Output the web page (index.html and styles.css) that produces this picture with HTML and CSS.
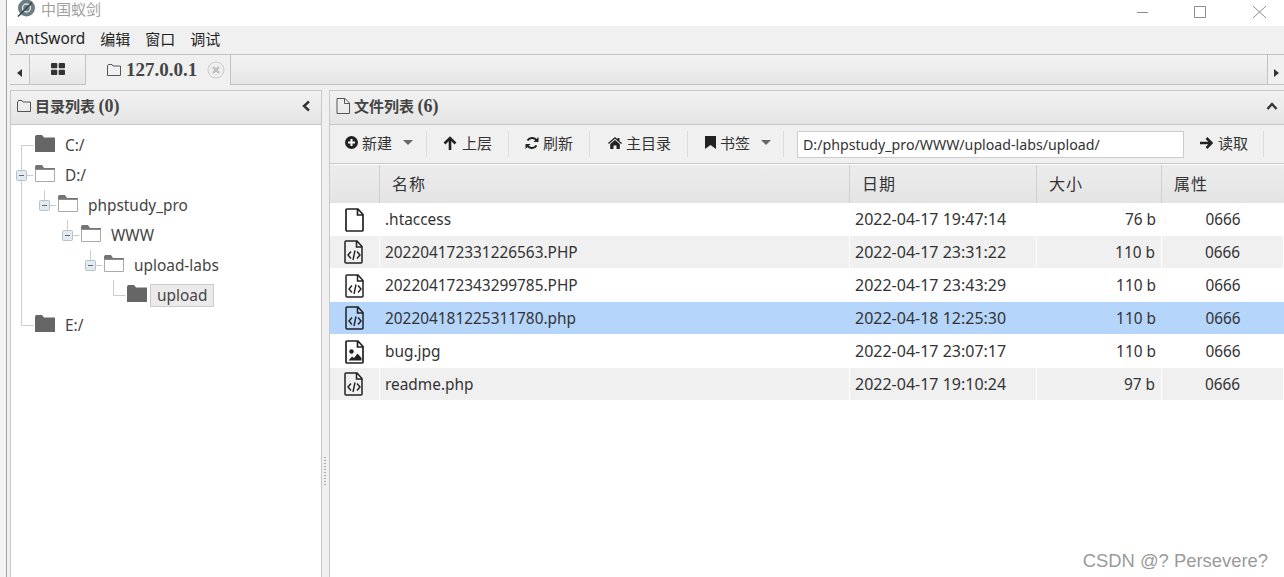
FILE: index.html
```html
<!DOCTYPE html>
<html lang="zh-CN">
<head>
    <meta charset="UTF-8">
    <meta name="viewport" content="width=device-width, initial-scale=1.0">
    <title>中国蚁剑</title>
    <link rel="stylesheet" href="styles.css">
</head>
<body>
    <svg class="defs" width="0" height="0">
        <symbol id="folder-closed" viewBox="0 0 20 17"><path d="M0 1.5 1 0h6l2 2.500h11V17H0z" fill="#666"/></symbol>
        <symbol id="folder-open" viewBox="0 0 20 17"><path d="M.5 4.500h19v12H.5z" fill="#fff" stroke="#aaa"/><path d="M0 4.500V1.500L1 0h6l2 3h11v1.500z" fill="#666" opacity=".9"/></symbol>
        <symbol id="page" viewBox="0 0 20 24"><path d="M2 1h11l5 5.500V22a1 1 0 0 1-1 1H2a1 1 0 0 1-1-1V2a1 1 0 0 1 1-1zM12.500 1v6H18" fill="none" stroke="currentColor" stroke-width="1.700"/></symbol>
        <symbol id="page-code" viewBox="0 0 20 24"><path d="M2 1h11l5 5.500V22a1 1 0 0 1-1 1H2a1 1 0 0 1-1-1V2a1 1 0 0 1 1-1zM12.500 1v6H18" fill="none" stroke="currentColor" stroke-width="1.500"/><path d="M7 11.500l-3 3.500 3 3.500M13 11.500l3 3.500-3 3.500M11 10.500 9 20" fill="none" stroke="currentColor" stroke-width="1.400"/></symbol>
        <symbol id="page-image" viewBox="0 0 20 24"><path d="M2 1h11l5 5.500V22a1 1 0 0 1-1 1H2a1 1 0 0 1-1-1V2a1 1 0 0 1 1-1zM12.500 1v6H18" fill="none" stroke="currentColor" stroke-width="1.700"/><circle cx="6.500" cy="11.500" r="2.200" fill="currentColor"/><path d="M3.500 20.500l3.500-4 2 1.500 3.500-4.500 4 4.500v2.500z" fill="currentColor"/></symbol>
    </svg>

    <div class="window">
        <div class="titlebar">
            <svg class="app-logo" width="20" height="20" viewBox="0 0 20 20">
                <circle cx="10.500" cy="9" r="8.500" fill="#6a7c82"/>
                <circle cx="10.500" cy="9" r="4" fill="none" stroke="#dfe4e6" stroke-width="1.400"/>
                <path d="M2 17.500 16 3.500" stroke="#3a474b" stroke-width="1.600"/>
            </svg>
            <span class="app-name">中国蚁剑</span>
            <div class="win-controls">
                <svg width="130" height="16" viewBox="0 0 130 16" fill="none" stroke="#8c8c8c">
                    <path d="M0 7.500h11"/>
                    <path d="M57.500 1.500h11v11h-11z"/>
                    <path d="M116 1l13 12M129 1l-13 12"/>
                </svg>
            </div>
        </div>

        <div class="menubar">
            <span class="menu-main">AntSword</span>
            <span>编辑</span>
            <span>窗口</span>
            <span>调试</span>
        </div>

        <div class="tabbar">
            <div class="tab-arrow tab-arrow-left"><i class="tri-left"></i></div>
            <div class="tab tab-home">
                <svg width="14" height="12" viewBox="0 0 14 12" fill="#333"><rect width="6.300" height="5.300" rx="1"/><rect x="7.700" width="6.300" height="5.300" rx="1"/><rect y="6.700" width="6.300" height="5.300" rx="1"/><rect x="7.700" y="6.700" width="6.300" height="5.300" rx="1"/></svg>
            </div>
            <div class="tab tab-active">
                <svg width="14" height="12" viewBox="0 0 14 12" fill="none" stroke="#555"><path d="M.5 2 1.500.5h3.500l1 1.500h7.500v9.500H.5z"/></svg>
                <span class="tab-title">127.0.0.1</span>
                <svg class="tab-close" width="18" height="18" viewBox="0 0 18 18"><circle cx="9" cy="9" r="8" fill="#eee" stroke="#ccc"/><path d="M6 6l6 6M12 6l-6 6" stroke="#bbb" stroke-width="2"/></svg>
            </div>
            <div class="tab-fill"></div>
            <div class="tab-arrow tab-arrow-right"><i class="tri-right"></i></div>
        </div>

        <div class="panels">
            <section class="panel panel-left">
                <div class="panel-head">
                    <svg width="14" height="12" viewBox="0 0 14 12" fill="none" stroke="#555"><path d="M.5 2 1.500.5h3.500l1 1.500h7.500v9.500H.5z"/></svg>
                    <span class="panel-title">目录列表 <span class="count">(0)</span></span>
                    <svg class="panel-toggle" width="10" height="12" viewBox="0 0 10 12" fill="none" stroke="#333" stroke-width="2.400"><path d="M8 1.500 3 6l5 4.500"/></svg>
                </div>
                <div class="tree">
                    <svg class="tree-lines" width="140" height="220" viewBox="0 0 140 220" fill="none" stroke="#ccc">
                        <path d="M10.500 20.500V200.500M10.500 20.500h12M10.500 50.500h12M10.500 200.500h12"/>
                        <path d="M33.500 65v15.500h12M56.500 95v15.500h12M79.500 125v15.500h12M102.500 155v15.500h12"/>
                        <g fill="#e3ebf0" stroke="#b5c2cc">
                            <rect x="5.500" y="45.500" width="10" height="10" rx="1"/>
                            <rect x="28.500" y="75.500" width="10" height="10" rx="1"/>
                            <rect x="51.500" y="105.500" width="10" height="10" rx="1"/>
                            <rect x="74.500" y="135.500" width="10" height="10" rx="1"/>
                        </g>
                        <path d="M8 50.500h5M31 80.500h5M54 110.500h5M77 140.500h5" stroke="#667"/>
                    </svg>
                    <div class="tree-row lvl-0"><svg class="folder"><use href="#folder-closed"/></svg><span class="node">C:/</span></div>
                    <div class="tree-row lvl-0"><svg class="folder"><use href="#folder-open"/></svg><span class="node">D:/</span></div>
                    <div class="tree-row lvl-1"><svg class="folder"><use href="#folder-open"/></svg><span class="node">phpstudy_pro</span></div>
                    <div class="tree-row lvl-2"><svg class="folder"><use href="#folder-open"/></svg><span class="node">WWW</span></div>
                    <div class="tree-row lvl-3"><svg class="folder"><use href="#folder-open"/></svg><span class="node">upload-labs</span></div>
                    <div class="tree-row lvl-4"><svg class="folder"><use href="#folder-closed"/></svg><span class="node node-selected">upload</span></div>
                    <div class="tree-row lvl-0"><svg class="folder"><use href="#folder-closed"/></svg><span class="node">E:/</span></div>
                </div>
            </section>

            <div class="splitter"><i class="grip"></i></div>

            <section class="panel panel-right">
                <div class="panel-head">
                    <svg width="14" height="16" viewBox="0 0 14 16" fill="none" stroke="#555"><path d="M1 .5h8l4.500 4.500v10.500H1zM8.500 .5V5.500h5"/></svg>
                    <span class="panel-title">文件列表 <span class="count">(6)</span></span>
                    <svg class="panel-toggle" width="12" height="10" viewBox="0 0 12 10" fill="none" stroke="#333" stroke-width="2.400"><path d="M1.500 8 6 3l4.500 5"/></svg>
                </div>

                <div class="toolbar">
                    <div class="tool tool-new">
                        <svg width="13" height="13" viewBox="0 0 13 13"><circle cx="6.500" cy="6.500" r="6.500" fill="#222"/><path d="M6.500 3v7M3 6.500h7" stroke="#fff" stroke-width="2"/></svg>
                        <span>新建</span><i class="caret"></i>
                    </div>
                    <div class="tool tool-up">
                        <svg width="14" height="14" viewBox="0 0 14 14" fill="none" stroke="#222" stroke-width="2.600"><path d="M7 14V2.500M1.500 7.500 7 2l5.500 5.500"/></svg>
                        <span>上层</span>
                    </div>
                    <div class="tool tool-refresh">
                        <svg width="14" height="14" viewBox="0 0 14 14" fill="none" stroke="#222" stroke-width="2"><path d="M12 5.500A5.300 5.300 0 0 0 2.500 4.500M2 8.500a5.300 5.300 0 0 0 9.500 1"/><path d="M13.500 1v5h-5zM.5 13V8h5z" fill="#222" stroke="none"/></svg>
                        <span>刷新</span>
                    </div>
                    <div class="tool tool-home">
                        <svg width="14" height="12" viewBox="0 0 14 12" fill="#222"><path d="M7 0 0 6l.8 1L7 1.800 13.200 7l.8-1-2.500-2.100V1h-2v1.200z"/><path d="M7 3 2.200 7v5h3.300V8.500h3V12h3.300V7z"/></svg>
                        <span>主目录</span>
                    </div>
                    <div class="tool tool-bookmark">
                        <svg width="11" height="13" viewBox="0 0 11 13" fill="#222"><path d="M0 0h11v13L5.500 9 0 13z"/></svg>
                        <span>书签</span><i class="caret"></i>
                    </div>
                    <input class="path-input" type="text" value="D:/phpstudy_pro/WWW/upload-labs/upload/">
                    <div class="tool tool-read">
                        <svg width="13" height="12" viewBox="0 0 13 12" fill="none" stroke="#222" stroke-width="2.600"><path d="M0 6h11M6.500 1l5 5-5 5"/></svg>
                        <span>读取</span>
                    </div>
                </div>

                <div class="grid">
                    <div class="grid-row grid-head">
                        <div></div>
                        <div class="cell-name">名称</div>
                        <div>日期</div>
                        <div>大小</div>
                        <div>属性</div>
                    </div>
                    <div class="grid-row">
                        <div class="cell-icon"><svg class="file-icon"><use href="#page"/></svg></div>
                        <div class="cell-name">.htaccess</div>
                        <div class="cell-date">2022-04-17 19:47:14</div>
                        <div class="cell-size">76 b</div>
                        <div class="cell-attr">0666</div>
                    </div>
                    <div class="grid-row row-alt">
                        <div class="cell-icon"><svg class="file-icon"><use href="#page-code"/></svg></div>
                        <div class="cell-name">202204172331226563.PHP</div>
                        <div class="cell-date">2022-04-17 23:31:22</div>
                        <div class="cell-size">110 b</div>
                        <div class="cell-attr">0666</div>
                    </div>
                    <div class="grid-row">
                        <div class="cell-icon"><svg class="file-icon"><use href="#page-code"/></svg></div>
                        <div class="cell-name">202204172343299785.PHP</div>
                        <div class="cell-date">2022-04-17 23:43:29</div>
                        <div class="cell-size">110 b</div>
                        <div class="cell-attr">0666</div>
                    </div>
                    <div class="grid-row row-selected">
                        <div class="cell-icon"><svg class="file-icon"><use href="#page-code"/></svg></div>
                        <div class="cell-name">202204181225311780.php</div>
                        <div class="cell-date">2022-04-18 12:25:30</div>
                        <div class="cell-size">110 b</div>
                        <div class="cell-attr">0666</div>
                    </div>
                    <div class="grid-row">
                        <div class="cell-icon"><svg class="file-icon"><use href="#page-image"/></svg></div>
                        <div class="cell-name">bug.jpg</div>
                        <div class="cell-date">2022-04-17 23:07:17</div>
                        <div class="cell-size">110 b</div>
                        <div class="cell-attr">0666</div>
                    </div>
                    <div class="grid-row row-alt">
                        <div class="cell-icon"><svg class="file-icon"><use href="#page-code"/></svg></div>
                        <div class="cell-name">readme.php</div>
                        <div class="cell-date">2022-04-17 19:10:24</div>
                        <div class="cell-size">97 b</div>
                        <div class="cell-attr">0666</div>
                    </div>
                </div>
            </section>
        </div>
    </div>

    <div class="watermark">CSDN @? Persevere?</div>
</body>
</html>
```

FILE: styles.css
```css
* {
    box-sizing: border-box;
}
html, body {
    margin: 0;
    height: 100%;
    overflow: hidden;
}
body {
    position: relative;
    padding-left: 6px;
    background-color: #f3f3f3;
    font-family: "Noto Sans", "Noto Sans CJK SC", sans-serif;
    font-size: 15.4px;
    color: #333;
}
.defs {
    position: absolute;
}
.window {
    display: flex;
    flex-direction: column;
    height: 577px;
    border-left: 1px solid #a3a3a3;
    background-color: #f0f0f0;
}
svg {
    flex: none;
}

/* title bar */
.titlebar {
    display: flex;
    align-items: center;
    height: 26px;
    padding-left: 9px;
    padding-bottom: 10px;
    background-color: #fff;
    overflow: hidden;
}
.app-logo {
    margin-top: 1px;
}
.app-name {
    margin-left: 5px;
    font-size: 15px;
    color: #a0a0a0;
}
.win-controls {
    display: flex;
    margin-left: auto;
    margin-right: 17px;
    margin-top: 9px;
}

/* menu */
.menubar {
    display: flex;
    align-items: center;
    gap: 15px;
    height: 28px;
    padding: 0 0 4px 8px;
    background-color: #f0f0f0;
    font-size: 15px;
    color: #222;
}
.menu-main {
    font-size: 15.4px;
}

/* tabs */
.tabbar {
    display: flex;
    height: 31px;
    margin-left: 3px;
    border-top: 1px solid #c2c2c2;
    border-bottom: 1px solid #c2c2c2;
    background: linear-gradient(#f3f3f3, #e6e6e6);
}
.tab-arrow {
    display: flex;
    align-items: center;
    justify-content: center;
    flex: none;
    background-color: #f0f0f0;
}
.tab-arrow-left {
    width: 20px;
    border-right: 1px solid #c2c2c2;
}
.tab-arrow-right {
    width: 17px;
    border-left: 1px solid #c2c2c2;
}
.tri-left, .tri-right {
    width: 0;
    height: 0;
    margin-top: 6px;
    border-top: 4px solid transparent;
    border-bottom: 4px solid transparent;
}
.tri-left {
    border-right: 5px solid #333;
}
.tri-right {
    border-left: 5px solid #333;
}
.tab {
    display: flex;
    align-items: center;
    flex: none;
}
.tab-home {
    justify-content: center;
    width: 56px;
    padding-bottom: 2px;
    border-right: 1px solid #c2c2c2;
}
.tab-active {
    width: 145px;
    height: 30px;
    padding-left: 21px;
    border-right: 1px solid #c2c2c2;
    background-color: #f0f0f0;
}
.tab-title {
    margin-left: 5px;
    font-family: "Liberation Serif", serif;
    font-weight: bold;
    font-size: 19px;
    color: #444;
}
.tab-close {
    margin-left: 10px;
}
.tab-fill {
    flex: 1;
}

/* panels */
.panels {
    display: flex;
    flex: 1;
    min-height: 0;
    margin-top: 5px;
    margin-left: 3px;
}
.panel {
    display: flex;
    flex-direction: column;
    border-top: 1px solid #c8c8c8;
}
.panel-left {
    width: 312px;
    flex: none;
    border-left: 1px solid #c8c8c8;
    border-right: 1px solid #c8c8c8;
}
.panel-right {
    flex: 1;
    min-width: 0;
    border-left: 1px solid #c8c8c8;
}
.splitter {
    position: relative;
    width: 7px;
    flex: none;
}
.grip {
    position: absolute;
    left: 2px;
    top: 367px;
    width: 2px;
    height: 30px;
    background: repeating-linear-gradient(#aaa 0 1px, transparent 1px 3px);
}
.panel-head {
    display: flex;
    align-items: center;
    gap: 4px;
    height: 34px;
    flex: none;
    padding: 0 6px 3px;
    border-bottom: 1px solid #c8c8c8;
    background: linear-gradient(#f2f2f2, #e4e4e4);
}
.panel-title {
    font-family: "Noto Sans CJK SC", sans-serif;
    font-weight: bold;
    font-size: 15px;
    color: #444;
}
.count {
    font-family: "Liberation Serif", serif;
    font-size: 18px;
}
.panel-toggle {
    margin-left: auto;
}
.panel-left .panel-toggle {
    margin-right: 4px;
}

/* tree */
.tree {
    position: relative;
    flex: 1;
    padding-top: 5px;
    background-color: #fff;
}
.tree-lines {
    position: absolute;
    left: 0;
    top: 0;
}
.tree-row {
    position: relative;
    display: flex;
    align-items: center;
    height: 30px;
    color: #444;
}
.lvl-0 { padding-left: 24px; }
.lvl-1 { padding-left: 47px; }
.lvl-2 { padding-left: 70px; }
.lvl-3 { padding-left: 93px; }
.lvl-4 { padding-left: 116px; }
.folder {
    width: 20px;
    height: 17px;
    margin-top: -3px;
}
.node {
    margin-left: 10px;
}
.node-selected {
    margin-left: 3px;
    padding: 0 6px;
    line-height: 21px;
    border: 1px solid #ccc;
    background-color: #eaeaea;
}

/* toolbar */
.toolbar {
    display: flex;
    align-items: center;
    height: 39px;
    flex: none;
    border-bottom: 1px solid #c8c8c8;
    background-color: #f0f0f0;
}
.tool {
    display: flex;
    align-items: center;
    gap: 4px;
    height: 26px;
    flex: none;
    padding: 0 0 3px 17px;
    border-right: 1px solid #dcdcdc;
    font-size: 15px;
    white-space: nowrap;
    color: #333;
}
.tool-new { width: 97px; padding-left: 15px; }
.tool-up { width: 82px; padding-left: 16px; gap: 5px; }
.tool-refresh { width: 81px; padding-left: 16px; }
.tool-home { width: 98px; padding-left: 18px; }
.tool-bookmark { width: 96px; }
.tool-read { width: 80px; padding-left: 16px; gap: 5px; }
.caret {
    width: 0;
    height: 0;
    margin-left: 7px;
    border-left: 5px solid transparent;
    border-right: 5px solid transparent;
    border-top: 5px solid #666;
}
.path-input {
    width: 387px;
    height: 27px;
    margin-left: 13px;
    padding: 0 5px;
    border: 1px solid #ccc;
    background-color: #fff;
    font-family: "Noto Sans", sans-serif;
    font-size: 14.200px;
    color: #333;
}

/* file grid */
.grid {
    flex: 1;
    padding-top: 1px;
    background-color: #fff;
}
.grid-row {
    display: grid;
    grid-template-columns: 50px 470px 187px 125px 1fr;
    align-items: center;
    height: 33px;
}
.grid-head {
    height: 38px;
    background: linear-gradient(#ececec, #e4e4e4);
    font-size: 16px;
    letter-spacing: 1px;
    color: #333;
}
.grid-head > div {
    display: flex;
    align-items: center;
    height: 100%;
    padding: 0 0 2px 12px;
    border-right: 1px solid #cfcfcf;
}
.grid-head > div:last-child {
    border-right: none;
}
.cell-icon {
    display: flex;
    justify-content: center;
    padding-right: 1px;
    color: #222;
}
.file-icon {
    width: 20px;
    height: 24px;
}
.grid-row .cell-name {
    padding-left: 5px;
}
.grid-head .cell-name {
    padding-left: 12px;
}
.cell-date {
    padding: 0 0 1px 5px;
    font-size: 16px;
}
.cell-size {
    padding-right: 6px;
    text-align: right;
}
.cell-attr {
    text-align: center;
}
.row-alt {
    height: 32px;
    margin-bottom: 1px;
    background-color: #f0f0f0;
}
.row-alt > div {
    display: flex;
    align-items: center;
    height: 100%;
    border-right: 1px solid #fff;
}
.row-alt .cell-size {
    justify-content: flex-end;
}
.row-alt .cell-attr {
    justify-content: center;
}
.row-alt .cell-icon {
    justify-content: center;
}
.row-selected {
    height: 32px;
    margin-bottom: 1px;
    background-color: #b5d5fb;
}

.watermark {
    position: absolute;
    right: 16px;
    bottom: 5px;
    font-family: "Liberation Sans", sans-serif;
    font-size: 18.400px;
    color: #9a9a9a;
}
```
